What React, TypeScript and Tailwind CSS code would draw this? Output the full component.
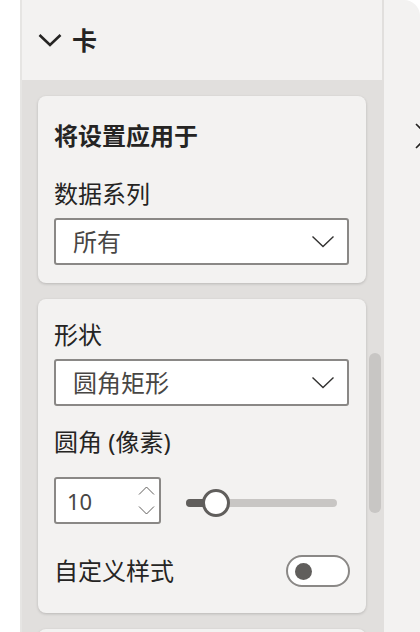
import { useState } from 'react'

const font = "font-['Noto_Sans','Noto_Sans_CJK_SC',sans-serif]"

function ChevronDown({ className, width = 1.6 }: { className?: string; width?: number }) {
  return (
    <svg className={className} viewBox="0 0 24 13" fill="none">
      <path d="M1.5 1.5L12 11.5L22.5 1.5" stroke="currentColor" strokeWidth={width} />
    </svg>
  )
}

function Dropdown({ value }: { value: string }) {
  return (
    <div className="flex h-[47px] w-[295px] items-center justify-between rounded-[3px] border-2 border-[#8a8886] bg-white pl-[17px] pr-[12px]">
      <span className="text-[24px] leading-none text-[#484644]">{value}</span>
      <ChevronDown className="h-[13px] w-[24px] text-[#323130]" width={1.4} />
    </div>
  )
}

function SettingCard({ children, className }: { children: React.ReactNode; className?: string }) {
  return (
    <div
      className={`rounded-[8px] bg-[#f3f2f1] pl-[16px] pr-[17px] shadow-[0_1px_3px_rgba(0,0,0,0.18)] ${className ?? ''}`}
    >
      {children}
    </div>
  )
}

export default function App() {
  const [custom, setCustom] = useState(false)
  const radius = 10
  const pct = 20

  return (
    <div className={`flex h-[632px] w-[420px] overflow-hidden bg-white text-[#252423] ${font}`}>
      <div className="w-[20px] shrink-0" />

      <div className="flex w-[364px] shrink-0 flex-col border-l-2 border-[#e6e5e3] bg-[#e1dfdd]">
        <div className="flex h-[80px] shrink-0 items-center gap-[10px] border-r-2 border-[#e1dfdd] bg-[#f3f2f1] pl-[16px]">
          <ChevronDown className="mt-[-1px] h-[14px] w-[24px] text-[#252423]" width={2.6} />
          <span className="text-[25px] font-bold leading-none">卡</span>
        </div>

        <div className="flex min-h-0 flex-1">
          <div className="flex w-[344px] shrink-0 flex-col gap-[16px] pl-[16px] pt-[16px]">
            <SettingCard className="pb-[18px] pt-[24px]">
              <div className="text-[24px] font-bold leading-[32px]">将设置应用于</div>
              <div className="mt-[26px] text-[24px] leading-[32px]">数据系列</div>
              <div className="mt-[8px]">
                <Dropdown value="所有" />
              </div>
            </SettingCard>

            <SettingCard className="pb-[26px] pt-[20px]">
              <div className="text-[24px] leading-[32px]">形状</div>
              <div className="mt-[8px]">
                <Dropdown value="圆角矩形" />
              </div>
              <div className="mt-[20px] text-[24px] leading-[32px]">圆角 (像素)</div>
              <div className="mt-[19px] flex items-center gap-[25px]">
                <div className="flex h-[47px] w-[107px] items-center justify-between rounded-[3px] border-2 border-[#8a8886] bg-white pl-[11px] pr-[4px]">
                  <span className="text-[22px] leading-none text-[#484644]">{radius}</span>
                  <div className="flex flex-col gap-[11px]">
                    <svg className="h-[9px] w-[17px] text-[#605e5c]" viewBox="0 0 17 9" fill="none">
                      <path d="M1 8.5L8.5 1L16 8.5" stroke="currentColor" strokeWidth="1" />
                    </svg>
                    <svg className="h-[9px] w-[17px] text-[#605e5c]" viewBox="0 0 17 9" fill="none">
                      <path d="M1 0.5L8.5 8L16 0.5" stroke="currentColor" strokeWidth="1" />
                    </svg>
                  </div>
                </div>
                <div className="relative mt-[4px] h-[8px] w-[151px] rounded-full bg-[#c8c6c4]">
                  <div className="h-full rounded-full bg-[#605e5c]" style={{ width: `${pct}%` }} />
                  <div
                    className="absolute top-1/2 h-[28px] w-[28px] -translate-x-1/2 -translate-y-1/2 rounded-full border-[3px] border-[#605e5c] bg-white"
                    style={{ left: `${pct}%` }}
                  />
                </div>
              </div>
              <div className="mt-[31px] flex items-center justify-between">
                <span className="text-[24px] leading-[32px]">自定义样式</span>
                <button
                  type="button"
                  onClick={() => setCustom(!custom)}
                  className="mr-[-1px] flex h-[32px] w-[64px] items-center rounded-full border-2 border-[#8a8886] bg-white px-[7px]"
                >
                  <span
                    className={`h-[17px] w-[17px] rounded-full bg-[#605e5c] ${custom ? 'ml-auto' : ''}`}
                  />
                </button>
              </div>
            </SettingCard>

            <SettingCard className="h-[60px] shrink-0">
              <span />
            </SettingCard>
          </div>

          <div className="flex w-[18px] shrink-0 justify-center pt-[273px]">
            <div className="h-[160px] w-[12px] rounded-full bg-[#c8c6c4]" />
          </div>
        </div>
      </div>

      <div className="relative flex-1 overflow-hidden rounded-tr-[16px] bg-[#f3f2f1]">
        <svg className="absolute left-[31px] top-[123px] h-[26px] w-[14px] text-[#252423]" viewBox="0 0 14 26" fill="none">
          <path d="M1 1L13 13L1 25" stroke="currentColor" strokeWidth="1.6" />
        </svg>
      </div>
    </div>
  )
}
